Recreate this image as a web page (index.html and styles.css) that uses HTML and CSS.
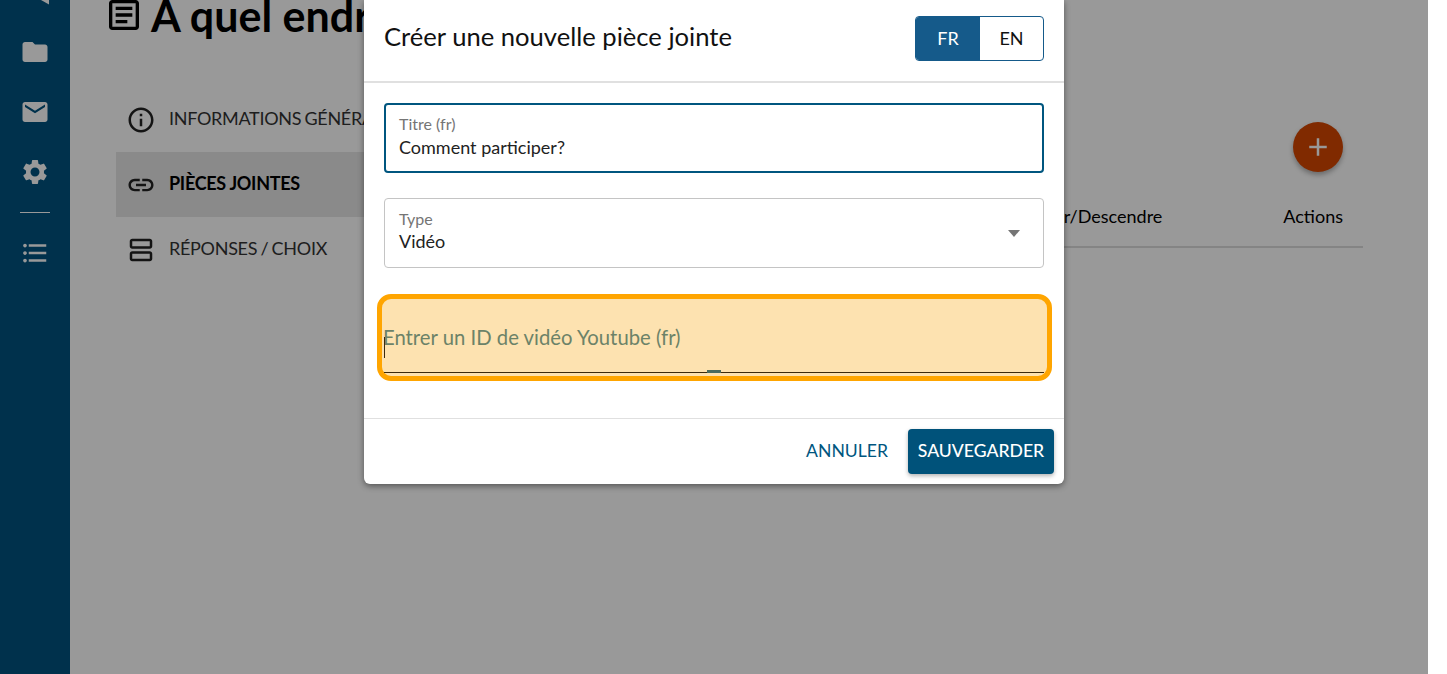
FILE: index.html
```html
<!DOCTYPE html>
<html lang="fr">
<head>
    <meta charset="UTF-8">
    <meta name="viewport" content="width=device-width, initial-scale=1.0">
    <title>Créer une nouvelle pièce jointe</title>
    <link rel="stylesheet" href="styles.css">
</head>
<body>
    <div class="app">
        <nav class="sidebar">
            <svg class="top-icon" viewBox="0 0 8 5"><path d="M0 0h8v4.500z"/></svg>
            <svg class="side-icon" viewBox="0 0 24 24"><path d="M10 4H4c-1.1 0-2 .9-2 2v12c0 1.1.9 2 2 2h16c1.1 0 2-.9 2-2V8c0-1.1-.9-2-2-2h-8l-2-2z"/></svg>
            <svg class="side-icon" viewBox="0 0 24 24"><path d="M20 4H4c-1.1 0-2 .9-2 2v12c0 1.1.9 2 2 2h16c1.100 0 2-.9 2-2V6c0-1.100-.9-2-2-2zm0 4-8 5-8-5V6l8 5 8-5v2z"/></svg>
            <svg class="side-icon" viewBox="0 0 24 24"><path d="M19.140 12.940c.04-.3.06-.61.06-.94 0-.32-.02-.64-.07-.94l2.030-1.580a.49.49 0 0 0 .12-.61l-1.920-3.320a.488.488 0 0 0-.59-.22l-2.390.96c-.5-.38-1.030-.7-1.620-.94l-.36-2.540a.484.484 0 0 0-.48-.41h-3.840c-.24 0-.43.17-.47.41l-.36 2.540c-.59.24-1.130.57-1.620.94l-2.390-.96c-.22-.08-.47 0-.59.22L2.740 8.870c-.12.21-.08.47.12.61l2.030 1.580c-.05.3-.09.63-.09.94s.02.64.07.94l-2.030 1.580a.49.49 0 0 0-.12.61l1.920 3.320c.12.22.37.29.59.22l2.390-.96c.5.38 1.030.7 1.620.94l.36 2.540c.05.24.24.41.48.41h3.840c.24 0 .44-.17.47-.41l.36-2.540c.59-.24 1.130-.56 1.620-.94l2.390.96c.22.08.47 0 .59-.22l1.920-3.320c.12-.22.07-.47-.12-.61l-2.010-1.580zM12 15.600c-1.980 0-3.600-1.620-3.600-3.600s1.620-3.600 3.600-3.600 3.600 1.620 3.600 3.600-1.620 3.600-3.600 3.600z"/></svg>
            <div class="side-divider"></div>
            <svg class="side-icon" viewBox="0 0 24 24"><path d="M4 10.500c-.83 0-1.500.67-1.500 1.500s.67 1.500 1.500 1.500 1.500-.67 1.500-1.500-.67-1.500-1.500-1.500zm0-6c-.83 0-1.500.67-1.500 1.500S3.170 7.500 4 7.500 5.500 6.830 5.500 6 4.830 4.500 4 4.500zm0 12c-.83 0-1.500.68-1.500 1.500s.68 1.500 1.500 1.500 1.500-.68 1.500-1.500-.67-1.500-1.500-1.500zM7 19h14v-2H7v2zm0-6h14v-2H7v2zm0-8v2h14V5H7z"/></svg>
        </nav>

        <main class="content">
            <h1 class="page-title">
                <svg class="title-icon" viewBox="0 0 24 24"><path d="M19 5v14H5V5h14m0-2H5c-1.100 0-2 .9-2 2v14c0 1.100.9 2 2 2h14c1.100 0 2-.9 2-2V5c0-1.100-.9-2-2-2z"/><path d="M14 17H7v-2h7v2zm3-4H7v-2h10v2zm0-4H7V7h10v2z"/></svg>
                À quel endroit
            </h1>
            <div class="panel">
                <ul class="tabs">
                    <li class="tab">
                        <svg class="tab-icon" viewBox="0 0 24 24"><path d="M11 7h2v2h-2zm0 4h2v6h-2zm1-9C6.480 2 2 6.480 2 12s4.480 10 10 10 10-4.480 10-10S17.520 2 12 2zm0 18c-4.410 0-8-3.590-8-8s3.590-8 8-8 8 3.590 8 8-3.590 8-8 8z"/></svg>
                        <span class="tab-label">Informations générales</span>
                    </li>
                    <li class="tab tab-active">
                        <svg class="tab-icon" viewBox="0 0 24 24"><path d="M3.900 12c0-1.710 1.390-3.100 3.100-3.100h4V7H7c-2.760 0-5 2.240-5 5s2.240 5 5 5h4v-1.900H7c-1.710 0-3.100-1.390-3.100-3.100zM8 13h8v-2H8v2zm9-6h-4v1.900h4c1.710 0 3.100 1.390 3.100 3.100s-1.390 3.100-3.100 3.100h-4V17h4c2.760 0 5-2.240 5-5s-2.240-5-5-5z"/></svg>
                        <span class="tab-label">Pièces jointes</span>
                    </li>
                    <li class="tab">
                        <svg class="tab-icon" viewBox="0 0 24 24"><path d="M19 13H5c-1.100 0-2 .9-2 2v4c0 1.100.9 2 2 2h14c1.100 0 2-.9 2-2v-4c0-1.100-.9-2-2-2zm0 6H5v-4h14v4zM19 3H5c-1.100 0-2 .9-2 2v4c0 1.100.9 2 2 2h14c1.100 0 2-.9 2-2V5c0-1.100-.9-2-2-2zm0 6H5V5h14v4z"/></svg>
                        <span class="tab-label">Réponses / Choix</span>
                    </li>
                </ul>
                <div class="table-area">
                    <button class="fab">
                        <svg viewBox="0 0 24 24"><path d="M19 13h-6v6h-2v-6H5v-2h6V5h2v6h6z"/></svg>
                    </button>
                    <div class="table-head">
                        <span>Monter/Descendre</span>
                        <span>Actions</span>
                    </div>
                </div>
            </div>
        </main>

        <div class="backdrop"></div>

        <section class="dialog">
            <header class="dialog-header">
                <h2>Créer une nouvelle pièce jointe</h2>
                <div class="lang-toggle">
                    <span class="lang lang-active">FR</span>
                    <span class="lang">EN</span>
                </div>
            </header>
            <div class="dialog-body">
                <div class="field field-focus">
                    <label>Titre (fr)</label>
                    <div class="field-value">Comment participer?</div>
                </div>
                <div class="field field-select">
                    <label>Type</label>
                    <div class="field-value">Vidéo</div>
                    <span class="select-arrow"></span>
                </div>
                <div class="video-field">
                    <div class="video-input">
                        <span class="caret"></span>
                        <span class="video-placeholder">Entrer un ID de vidéo Youtube (fr)</span>
                        <span class="video-mark"></span>
                    </div>
                </div>
            </div>
            <footer class="dialog-footer">
                <button class="btn-cancel">Annuler</button>
                <button class="btn-save">Sauvegarder</button>
            </footer>
        </section>
    </div>
</body>
</html>
```

FILE: styles.css
```css
* {
    box-sizing: border-box;
}
html, body {
    height: 100%;
}
body {
    margin: 0;
    background-color: white;
    font-family: Lato, "Open Sans", sans-serif;
    overflow: hidden;
}
.app {
    position: relative;
    display: flex;
    width: 1428px;
    height: 674px;
    overflow: hidden;
    background-color: white;
}

/* Left navigation */
.sidebar {
    flex: 0 0 70px;
    display: flex;
    flex-direction: column;
    align-items: center;
    background-color: #00537f;
    padding-top: 37px;
}
.side-icon {
    width: 30px;
    height: 30px;
    fill: white;
    margin-bottom: 30px;
}
.top-icon {
    position: absolute;
    top: 0;
    left: 41px;
    width: 8px;
    height: 5px;
    fill: white;
}
.side-divider {
    width: 30px;
    height: 1px;
    background-color: white;
    margin: -5px 0 25px;
}

/* Page behind the dialog */
.content {
    flex: 1;
    padding-left: 34px;
}
.page-title {
    display: flex;
    align-items: center;
    gap: 7px;
    height: 40px;
    margin: -5px 0 0;
    font-size: 43px;
    font-weight: 700;
    color: black;
    white-space: nowrap;
}
.title-icon {
    width: 40px;
    height: 40px;
    flex: none;
}
.panel {
    display: flex;
    margin-top: 52px;
    margin-left: 12px;
}
.tabs {
    list-style: none;
    margin: 0;
    padding: 0;
    width: 300px;
}
.tab {
    display: flex;
    align-items: center;
    gap: 13px;
    height: 65px;
    padding-left: 10px;
    font-size: 18px;
    letter-spacing: -0.3px;
    word-spacing: -1px;
    text-transform: uppercase;
    color: #333;
    white-space: nowrap;
}
.tab-label {
    margin-bottom: 3px;
}
.tab-active {
    background-color: #e6e6e6;
    font-weight: 700;
    word-spacing: 0;
    color: black;
}
.tab-icon {
    width: 30px;
    height: 30px;
    fill: #222;
    flex: none;
}
.table-area {
    position: relative;
    flex: 1;
    padding-right: 65px;
}
.fab {
    position: absolute;
    top: 35px;
    right: 85px;
    width: 50px;
    height: 50px;
    padding: 10px;
    border: none;
    border-radius: 50%;
    background-color: #d54600;
    box-shadow: 0 3px 5px rgba(0,0,0,0.3);
}
.fab svg {
    display: block;
    fill: white;
}
.table-head {
    display: flex;
    justify-content: flex-end;
    gap: 121px;
    height: 161px;
    padding: 118px 20px 0 0;
    border-bottom: 2px solid #ddd;
    font-size: 18px;
    color: black;
    white-space: nowrap;
}

.backdrop {
    position: absolute;
    inset: 0;
    background-color: rgba(0,0,0,0.4);
}

/* Dialog */
.dialog {
    position: absolute;
    top: 0;
    left: 364px;
    width: 700px;
    height: 484px;
    display: flex;
    flex-direction: column;
    background-color: white;
    border-radius: 0 0 6px 6px;
    box-shadow: 0 2px 6px rgba(0,0,0,0.45);
}
.dialog-header {
    display: flex;
    justify-content: space-between;
    align-items: center;
    height: 83px;
    padding: 0 20px 5px;
    border-bottom: 2px solid #e0e0e0;
}
.dialog-header h2 {
    margin: 0 0 5px;
    font-size: 25.6px;
    font-weight: 400;
    color: #111;
}
.lang-toggle {
    display: flex;
    width: 129px;
    height: 45px;
    border: 1px solid #155a8a;
    border-radius: 4px;
    overflow: hidden;
}
.lang {
    flex: 1;
    display: flex;
    align-items: center;
    justify-content: center;
    font-size: 18px;
    color: #111;
}
.lang-active {
    flex: none;
    width: 64px;
    background-color: #155a8a;
    color: white;
}
.dialog-body {
    flex: 1;
    padding: 20px 20px 0;
}
.field {
    position: relative;
    height: 70px;
    margin-bottom: 25px;
    padding: 10px 14px 0;
    border: 1px solid #c4c4c4;
    border-radius: 4px;
}
.field label {
    display: block;
    font-size: 16px;
    line-height: 19px;
    color: #757575;
}
.field-value {
    margin-top: 1px;
    font-size: 18px;
    line-height: 25px;
    color: #222;
}
.field-focus {
    padding: 9px 13px 0;
    border: 2px solid #00567f;
}
.field-focus .field-value {
    margin-top: 2px;
}
.field-select {
    margin-bottom: 26px;
}
.select-arrow {
    position: absolute;
    top: 31px;
    right: 23px;
    border-left: 6.5px solid transparent;
    border-right: 6.5px solid transparent;
    border-top: 7px solid #757575;
}
.video-field {
    width: 675px;
    height: 87px;
    margin-left: -7px;
    padding: 0 3px 0 2px;
    border: 5px solid orange;
    border-radius: 14px;
    background-color: #fde2b0;
}
.video-input {
    position: relative;
    display: flex;
    align-items: center;
    height: 74px;
    border-bottom: 1px solid #3d2a0c;
    font-size: 20.3px;
    color: #6c8268;
}
.video-placeholder {
    margin: 2px 0 0 -1px;
}
.caret {
    position: absolute;
    top: 38px;
    left: 0;
    width: 1px;
    height: 21px;
    background-color: #3d2a0c;
}
.video-mark {
    position: absolute;
    bottom: -1px;
    left: 323px;
    width: 14px;
    height: 3px;
    background-color: #4a6b5e;
}
.dialog-footer {
    display: flex;
    justify-content: flex-end;
    align-items: center;
    gap: 20px;
    height: 66px;
    padding: 0 10px;
    border-top: 1px solid #e0e0e0;
}
.dialog-footer button {
    font-family: inherit;
    font-size: 17.6px;
    text-transform: uppercase;
    border: none;
    cursor: pointer;
}
.btn-cancel {
    padding: 0 0 3px;
    background: none;
    color: #00567f;
}
.btn-save {
    width: 146px;
    height: 45px;
    padding: 0 0 3px;
    border-radius: 4px;
    background-color: #00527a;
    color: white;
    font-weight: 500;
    box-shadow: 0 2px 4px rgba(0,0,0,0.3);
}
```
